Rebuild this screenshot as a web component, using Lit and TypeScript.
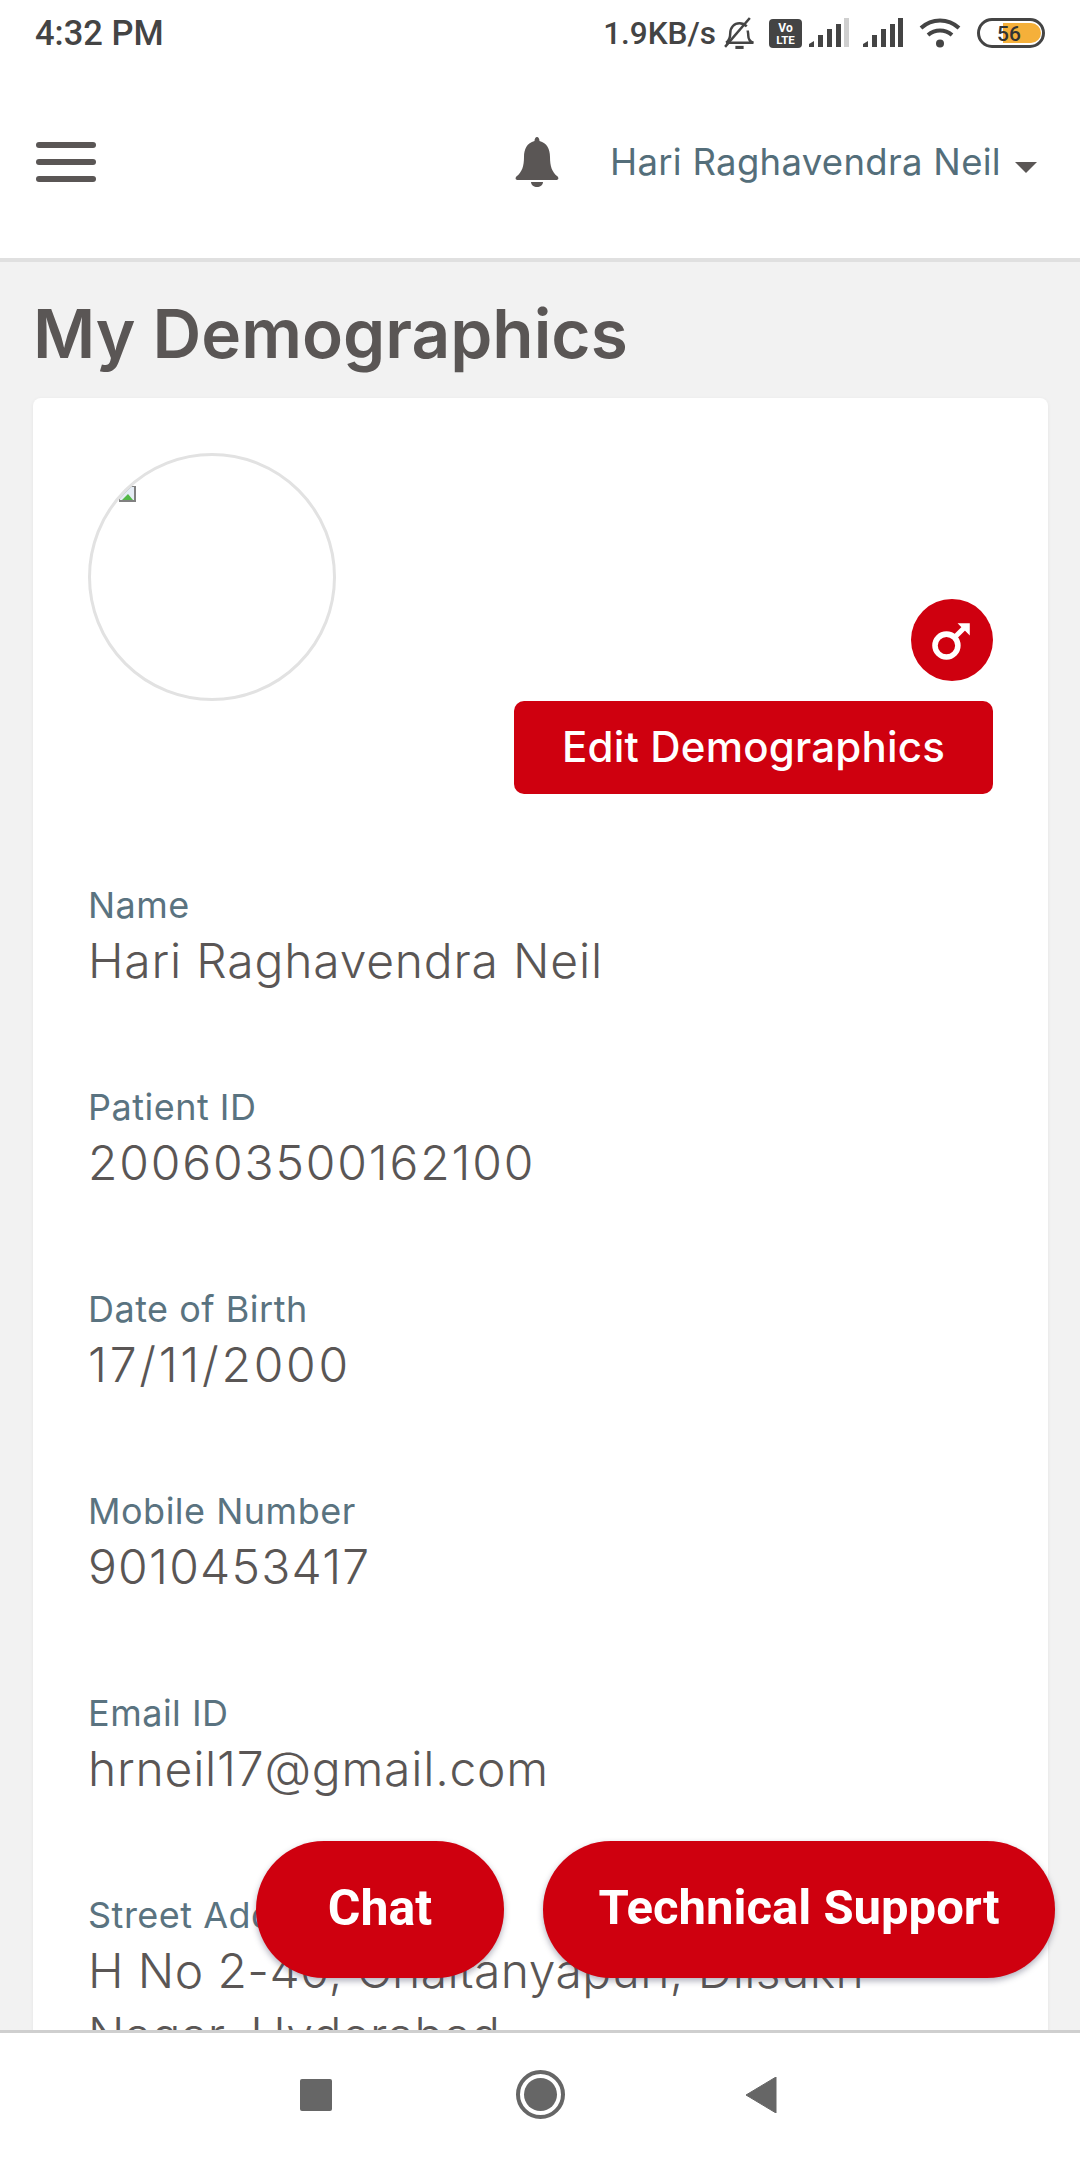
import { LitElement, html, css, svg } from 'lit';
import { customElement } from 'lit/decorators.js';

const fields: Array<{ label: string; value: string; tracking: number }> = [
  { label: 'Name', value: 'Hari Raghavendra Neil', tracking: 0.8 },
  { label: 'Patient ID', value: '200603500162100', tracking: 1.84 },
  { label: 'Date of Birth', value: '17/11/2000', tracking: 2.75 },
  { label: 'Mobile Number', value: '9010453417', tracking: 1.24 },
  { label: 'Email ID', value: 'hrneil17@gmail.com', tracking: 0.77 },
  { label: 'Street Address', value: 'H No 2-40, Chaitanyapuri, Dilsukh Nagar, Hyderabad', tracking: 0.4 },
];

const signal = (lastBar: string) => svg`
  <svg class="ico" width="40" height="30" viewBox="0 0 40 30">
    <path d="M0 29v-3l5-3v6z" fill="#444"/>
    <rect x="9" y="17" width="5" height="12" fill="#444"/>
    <rect x="18" y="11" width="5" height="18" fill="#444"/>
    <rect x="27" y="6" width="5" height="23" fill="#444"/>
    <rect x="35" y="0" width="5" height="29" fill="${lastBar}"/>
  </svg>`;

@customElement('app-root')
export class AppRoot extends LitElement {
  private _statusBar() {
    return html`
      <div class="status">
        <span class="time">4:32 PM</span>
        <div class="status-right">
          <span class="speed">1.9KB/s</span>
          <svg class="ico mute" width="33" height="33" viewBox="0 0 32 32" fill="none" stroke="#444" stroke-width="2.4">
            <path d="M3 25c3-2 4-4 4-9 0-6 4-10 9-10 3 0 5 1 7 3M24 13c0 1 .5 3 .5 5 0 3 2 6 5 7H3"/>
            <path d="M2 29 26 1"/>
            <path d="M12 29.500h8" stroke-width="3"/>
          </svg>
          <svg class="ico volte" width="33" height="29" viewBox="0 0 33 29">
            <rect width="33" height="29" rx="4" fill="#444"/>
            <text x="16.500" y="12.500" text-anchor="middle" font-size="12" font-weight="700" fill="#fff">Vo</text>
            <text x="16.500" y="25" text-anchor="middle" font-size="11.500" font-weight="700" fill="#fff">LTE</text>
          </svg>
          ${signal('#cfcfcf')}
          <span class="sig2">${signal('#444')}</span>
          <svg class="ico wifi" width="42" height="30" viewBox="0 0 42 30" fill="none" stroke="#444" stroke-width="4">
            <path d="M2 10c11-10 27-10 38 0"/>
            <path d="M9 17c7-6 17-6 24 0"/>
            <circle cx="21" cy="25.500" r="4" fill="#444" stroke="none"/>
          </svg>
          <svg class="ico battery" width="68" height="30" viewBox="0 0 68 30">
            <path d="M26 5h28a10 10 0 0 1 0 20H26z" fill="#f5b03a"/>
            <rect x="1.500" y="1.500" width="65" height="27" rx="13.500" fill="none" stroke="#444" stroke-width="3"/>
            <text x="32" y="23" text-anchor="middle" font-size="21" font-weight="500" fill="#333">56</text>
          </svg>
        </div>
      </div>
    `;
  }

  private _header() {
    return html`
      <header class="topbar">
        <div class="burger"><i></i><i></i><i></i></div>
        <div class="topbar-right">
          <svg class="bell" width="44" height="50" viewBox="0 0 44 50" fill="#5a5655">
            <path d="M22 0c1.500 0 2.500 2 2.500 4C32 6 35 12 35 20c0 9 2 15 7 19 2 1.500 2 4-1 4H3c-3 0-3-2.500-1-4 5-4 7-10 7-19 0-8 3-14 10.500-16 0-2 1-4 2.500-4z"/>
            <path d="M16 45h12c0 3-3 5-6 5s-6-2-6-5z"/>
          </svg>
          <span class="user">Hari Raghavendra Neil</span>
          <span class="caret"></span>
        </div>
      </header>
    `;
  }

  private _profile() {
    return html`
      <div class="profile">
        <div class="avatar">
          <svg width="17" height="16" viewBox="0 0 17 16">
            <rect width="17" height="16" fill="#808080"/>
            <rect x="1" y="1" width="14" height="13" fill="#e6edf5"/>
            <path d="M3 14 9 8l5 6z" fill="#54b848"/>
          </svg>
        </div>
        <div class="profile-actions">
          <span class="gender">
            <svg width="40" height="40" viewBox="0 0 36 36" fill="none" stroke="#fff">
              <circle cx="13" cy="23" r="10.300" stroke-width="5"/>
              <path d="M20 16 30 6" stroke-width="4.500"/>
              <path d="M23 3h11v11l-4-4-3-3z" fill="#fff" stroke="none"/>
            </svg>
          </span>
          <button class="edit">Edit Demographics</button>
        </div>
      </div>
    `;
  }

  override render() {
    return html`
      ${this._statusBar()}
      ${this._header()}
      <main class="content">
        <h1>My Demographics</h1>
        <section class="card">
          ${this._profile()}
          ${fields.map(
            (f) => html`
              <div class="field">
                <div class="label">${f.label}</div>
                <div class="value" style="letter-spacing:${f.tracking}px">${f.value}</div>
              </div>
            `
          )}
        </section>
      </main>
      <div class="fabs">
        <button class="fab chat">Chat</button>
        <button class="fab support">Technical Support</button>
      </div>
      <nav class="navbar">
        <span class="nav-square"></span>
        <span class="nav-home"><i></i></span>
        <svg class="nav-back" width="32" height="36" viewBox="0 0 32 36"><path d="M31 0v36L1 18z" fill="#666" stroke="#666" stroke-linejoin="round"/></svg>
      </nav>
    `;
  }

  static styles = css`
    :host {
      display: flex;
      flex-direction: column;
      position: relative;
      width: 1080px;
      height: 2160px;
      overflow: hidden;
      background: #f2f2f2;
      font-family: Inter, 'Noto Sans', sans-serif;
      color: #5a5655;
    }

    .status {
      display: flex;
      align-items: center;
      justify-content: space-between;
      height: 66px;
      padding: 0 35px;
      background: #fff;
      font-family: Roboto, sans-serif;
      color: #444;
      box-sizing: border-box;
      flex: none;
    }

    .time {
      font-size: 34.500px;
      font-weight: 500;
    }

    .speed {
      font-size: 31.500px;
      font-weight: 500;
    }

    .status-right {
      display: flex;
      align-items: center;
      gap: 7px;
    }

    .ico {
      display: block;
      flex: none;
    }

    .ico text {
      font-family: Roboto, sans-serif;
    }

    .volte {
      margin-left: 6px;
    }

    .sig2 {
      margin-left: 7px;
    }

    .wifi,
    .battery {
      margin-left: 9px;
    }

    .topbar {
      flex: none;
      display: flex;
      align-items: center;
      justify-content: space-between;
      box-sizing: border-box;
      height: 196px;
      padding: 0 43px 0 36px;
      background: #fff;
      border-bottom: 4px solid #e0e0e0;
    }

    .burger {
      display: flex;
      flex-direction: column;
      gap: 11px;
      width: 60px;
    }

    .burger i {
      display: block;
      height: 6px;
      border-radius: 3px;
      background: #5a5655;
    }

    .topbar-right {
      display: flex;
      align-items: center;
    }

    .bell {
      display: block;
      margin-right: 51px;
    }

    .user {
      font-size: 36.500px;
      color: #546e7a;
      letter-spacing: 0.3px;
    }

    .caret {
      width: 0;
      height: 0;
      margin: 10px 0 0 14px;
      border-left: 11px solid transparent;
      border-right: 11px solid transparent;
      border-top: 11px solid #5a5655;
    }

    .content {
      flex: 1;
      min-height: 0;
      overflow: hidden;
      padding: 0 32px 0 33px;
    }

    h1 {
      margin: 0;
      height: 136px;
      padding-top: 4px;
      box-sizing: border-box;
      line-height: 136px;
      font-size: 67.500px;
      font-weight: 600;
      color: #5a5655;
    }

    .card {
      box-sizing: border-box;
      padding: 55px 55px 0 55px;
      background: #fff;
      border-radius: 8px;
      box-shadow: 0 1px 4px rgba(0, 0, 0, 0.06);
    }

    .profile {
      display: flex;
      justify-content: space-between;
      margin-bottom: 89px;
    }

    .avatar {
      box-sizing: border-box;
      width: 248px;
      height: 248px;
      padding: 30px 0 0 28px;
      border: 3px solid #e2e2e2;
      border-radius: 50%;
      overflow: hidden;
    }

    .avatar svg {
      display: block;
    }

    .profile-actions {
      display: flex;
      flex-direction: column;
      align-items: flex-end;
      padding-top: 146px;
      gap: 20px;
    }

    .gender {
      display: flex;
      align-items: center;
      justify-content: center;
      width: 82px;
      height: 82px;
      border-radius: 50%;
      background: #cf000f;
    }

    .edit {
      width: 479px;
      height: 93px;
      padding: 0 0 2px;
      border: none;
      border-radius: 10px;
      background: #cf000f;
      color: #fff;
      font-family: inherit;
      font-size: 42px;
      font-weight: 500;
      letter-spacing: 0.2px;
    }

    .field {
      height: 202px;
    }

    .label {
      height: 46px;
      line-height: 44px;
      font-size: 36px;
      letter-spacing: 0.5px;
      color: #5a7380;
    }

    .value {
      line-height: 64px;
      font-size: 48px;
      font-weight: 300;
      color: #5a5655;
    }

    .fabs {
      position: absolute;
      top: 1841px;
      left: 256px;
      display: flex;
      gap: 39px;
    }

    .fab {
      height: 137px;
      padding: 0 0 4px;
      border: none;
      border-radius: 68px;
      background: #cf000f;
      color: #fff;
      font-family: Roboto, sans-serif;
      font-size: 50px;
      font-weight: 700;
      box-shadow: 0 3px 6px rgba(60, 60, 90, 0.4);
    }

    .chat {
      width: 248px;
    }

    .support {
      width: 512px;
      font-size: 49px;
    }

    .navbar {
      flex: none;
      display: flex;
      align-items: center;
      justify-content: center;
      gap: 184px;
      box-sizing: border-box;
      height: 130px;
      padding: 0 4px 4px 0;
      background: #fff;
      border-top: 3px solid #cfcfcf;
    }

    .nav-square {
      width: 32px;
      height: 32px;
      background: #666;
      border-radius: 2px;
    }

    .nav-home {
      display: flex;
      align-items: center;
      justify-content: center;
      box-sizing: border-box;
      width: 49px;
      height: 49px;
      border: 4px solid #666;
      border-radius: 50%;
    }

    .nav-home i {
      display: block;
      width: 33px;
      height: 33px;
      border-radius: 50%;
      background: #666;
    }

    .nav-back {
      margin-left: -4px;
    }
  `;
}

declare global {
  interface HTMLElementTagNameMap {
    'app-root': AppRoot;
  }
}
